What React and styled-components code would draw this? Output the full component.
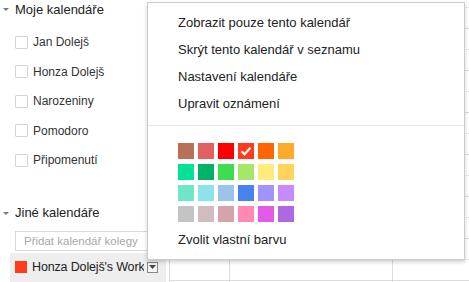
import React from 'react';
import styled, { createGlobalStyle } from 'styled-components';

const GlobalStyle = createGlobalStyle`
  html, body {
    margin: 0;
    padding: 0;
    background: #fff;
    overflow: hidden;
  }
  body {
    font-family: "Liberation Sans", Arial, sans-serif;
  }
`;

const myCalendars = ['Jan Dolejš', 'Honza Dolejš', 'Narozeniny', 'Pomodoro', 'Připomenutí'];

const menuItems = [
  'Zobrazit pouze tento kalendář',
  'Skrýt tento kalendář v seznamu',
  'Nastavení kalendáře',
  'Upravit oznámení',
];

const swatches = [
  ['#b87059', '#e36060', '#ff0000', '#ff3b1f', '#ff6600', '#ffa92b'],
  ['#00e394', '#00b16a', '#40dc4f', '#a6e66b', '#fdec7c', '#ffd35c'],
  ['#6fe6c9', '#8ce4ea', '#9cc3e8', '#4882ec', '#a393ff', '#c88bff'],
  ['#c4c4c4', '#d1bdbe', '#d7a3ab', '#ff88b5', '#e35ae8', '#b068e2'],
];

const App = () => {
  const slots = Array.from({ length: 14 }, (_, i) => i);
  return (
    <>
      <GlobalStyle />
      <Page>
        <Sidebar>
          <SectionHeader>
            <Caret />
            Moje kalendáře
          </SectionHeader>
          <CalList>
            {myCalendars.map((name) => (
              <CalItem key={name}>
                <Checkbox />
                <span>{name}</span>
              </CalItem>
            ))}
          </CalList>
          <SectionHeader second>
            <Caret />
            Jiné kalendáře
          </SectionHeader>
          <AddInput placeholder="Přidat kalendář kolegy" />
          <SelectedRow>
            <ColorChip />
            <RowTitle>Honza Dolejš's Work</RowTitle>
            <DropButton>
              <svg width="7" height="4" viewBox="0 0 7 4">
                <path d="M0 0h7L3.5 4z" fill="#444" />
              </svg>
            </DropButton>
          </SelectedRow>
        </Sidebar>

        <Grid>
          {[60, 163, 163].map((w, c) => (
            <Column key={c} style={{ width: w }}>
              {slots.map((s) => (
                <Slot key={s} dotted={s % 2 === 0} />
              ))}
            </Column>
          ))}
        </Grid>

        <Menu>
          {menuItems.map((t) => (
            <MenuItem key={t}>{t}</MenuItem>
          ))}
          <Separator />
          <Palette>
            {swatches.flat().map((c, i) => (
              <Swatch key={i} color={c}>
                {i === 3 && (
                  <svg width="12" height="10" viewBox="0 0 12 10">
                    <path d="M1.5 5.2l3 3L10.5 1.8" stroke="#fff" strokeWidth="2.2" fill="none" />
                  </svg>
                )}
              </Swatch>
            ))}
          </Palette>
          <MenuItem>Zvolit vlastní barvu</MenuItem>
        </Menu>
      </Page>
    </>
  );
};

export default App;

const Page = styled.div`
  position: relative;
  display: flex;
  width: 469px;
  height: 282px;
  overflow: hidden;
`;

const Sidebar = styled.div`
  width: 169px;
  flex-shrink: 0;
  display: flex;
  flex-direction: column;
`;

const SectionHeader = styled.div`
  display: flex;
  align-items: center;
  height: 18px;
  padding-left: 15px;
  margin-top: ${(p) => (p.second ? '29px' : '0')};
  position: relative;
  font-size: 13px;
  color: #222;
`;

const Caret = styled.span`
  position: absolute;
  left: 3px;
  top: 8px;
  width: 0;
  height: 0;
  border-left: 3px solid transparent;
  border-right: 3px solid transparent;
  border-top: 3px solid #777;
`;

const CalList = styled.div`
  margin-top: 9.25px;
  display: flex;
  flex-direction: column;
`;

const CalItem = styled.div`
  height: 29.5px;
  display: flex;
  align-items: center;
  padding-left: 15px;
  gap: 5px;
  font-size: 12px;
  color: #333;
`;

const Checkbox = styled.span`
  width: 11px;
  height: 11px;
  border: 1px solid #d4d4d4;
  border-radius: 1px;
  background: #fff;
`;

const AddInput = styled.input`
  margin: 9px 0 0 15px;
  width: 150px;
  height: 20px;
  box-sizing: border-box;
  border: 1px solid #d9d9d9;
  padding: 0 8px;
  font-family: "Liberation Sans", Arial, sans-serif;
  font-size: 11.5px;
  outline: none;
  &::placeholder {
    color: #a8a8a8;
  }
`;

const SelectedRow = styled.div`
  margin: 2px 0 0 10px;
  width: 156px;
  height: 29px;
  box-sizing: border-box;
  background: #eeeeee;
  display: flex;
  align-items: center;
  padding: 0 8px 0 5px;
`;

const ColorChip = styled.span`
  width: 12px;
  height: 12px;
  flex-shrink: 0;
  background: #ff3d1c;
`;

const RowTitle = styled.span`
  margin-left: 5px;
  width: 112px;
  overflow: hidden;
  white-space: nowrap;
  text-overflow: clip;
  font-size: 12.5px;
  letter-spacing: -0.15px;
  color: #222;
`;

const DropButton = styled.span`
  margin-left: 3px;
  width: 9px;
  height: 9px;
  border: 1px solid #888;
  background: #f4f4f4;
  display: flex;
  align-items: center;
  justify-content: center;
`;

const Grid = styled.div`
  display: flex;
  flex: 1;
  overflow: hidden;
  padding-top: 7px;
`;

const Column = styled.div`
  flex-shrink: 0;
  border-left: 1px solid #dcdcdc;
  box-sizing: border-box;
  display: flex;
  flex-direction: column;
`;

const Slot = styled.div`
  height: 21px;
  flex-shrink: 0;
  box-sizing: border-box;
  border-top: 1px ${(p) => (p.dotted ? 'dotted #d8d8d8' : 'solid #dcdcdc')};
`;

const Menu = styled.div`
  position: absolute;
  left: 147px;
  top: 2px;
  width: 318px;
  height: 258px;
  box-sizing: border-box;
  background: #fff;
  border: 1px solid rgba(0, 0, 0, 0.2);
  box-shadow: 0 2px 4px rgba(0, 0, 0, 0.2);
  padding-top: 6px;
  display: flex;
  flex-direction: column;
`;

const MenuItem = styled.div`
  height: 27px;
  display: flex;
  align-items: center;
  padding-left: 30px;
  font-size: 13px;
  color: #222;
  white-space: nowrap;
`;

const Separator = styled.div`
  margin-top: 8px;
  height: 1px;
  background: #e5e5e5;
`;

const Palette = styled.div`
  margin: 17px 0 4px 30px;
  display: grid;
  grid-template-columns: repeat(6, 16px);
  grid-auto-rows: 16px;
  column-gap: 4px;
  row-gap: 5px;
`;

const Swatch = styled.div`
  background: ${(p) => p.color};
  display: flex;
  align-items: center;
  justify-content: center;
`;
